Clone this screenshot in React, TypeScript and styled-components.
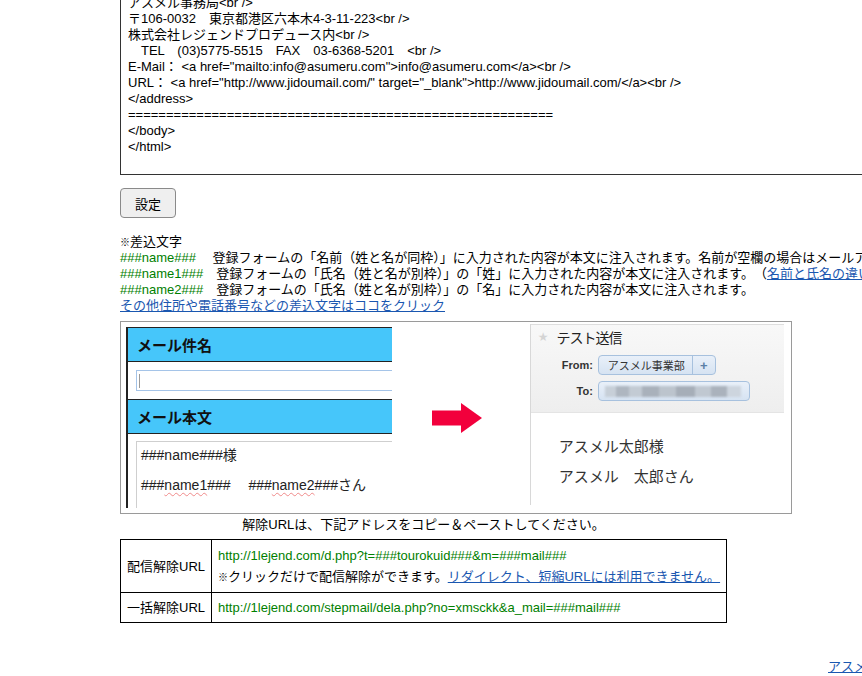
import React from "react";
import styled, { createGlobalStyle } from "styled-components";

const GlobalStyle = createGlobalStyle`
  html, body { margin: 0; padding: 0; background: #fff; overflow: hidden; }
  body {
    font-family: "Liberation Sans", "Noto Sans CJK JP", sans-serif;
    font-size: 13px;
    color: #000;
  }
`;

const Page = styled.div`
  width: 1100px;
  box-sizing: border-box;
  padding-left: 120px;
  margin-top: -40px;
`;

const SourceBox = styled.div`
  width: 900px;
  height: 215px;
  box-sizing: border-box;
  border: 1px solid #333;
  padding: 2px 7px;
  font: 13px/16px "Liberation Sans", "Noto Sans CJK JP", sans-serif;
  white-space: pre;
  overflow: hidden;
`;

const SetButton = styled.button`
  display: block;
  margin-top: 13px;
  width: 56px;
  height: 30px;
  padding: 0;
  border: 1px solid #8a8a8a;
  border-radius: 4px;
  background: #efefef;
  color: #000;
  font: 13px "Liberation Sans", "Noto Sans CJK JP", sans-serif;
`;

const Notes = styled.div`
  margin-top: 16px;
  line-height: 16px;
  white-space: nowrap;
`;

const NoteLine = styled.div``;

const Mark = styled.span`
  font-size: 10px;
  line-height: 1;
`;

const Tag = styled.span`
  color: #008000;
`;

const Link = styled.a`
  color: #1a57b0;
  text-decoration: underline;
  cursor: pointer;
`;

const Figure = styled.div`
  margin-top: 7px;
  width: 672px;
  height: 193px;
  box-sizing: border-box;
  border: 1px solid #9a9a9a;
  padding: 2px 7px 0 5px;
  display: flex;
  align-items: flex-start;
  overflow: hidden;
  background: #fff;
`;

const FormPanel = styled.div`
  margin-top: 3px;
  width: 265px;
  height: 181px;
  border-left: 2px solid #222;
  display: flex;
  flex-direction: column;
  overflow: hidden;
`;

const FormHeader = styled.div`
  height: 33px;
  border-top: 1px solid #222;
  border-bottom: 1px solid #222;
  background: #46c6fa;
  display: flex;
  align-items: center;
  padding-left: 9px;
  font: bold 15px "Noto Sans CJK JP", sans-serif;
  color: #111;
`;

const InputRow = styled.div`
  height: 37px;
  box-sizing: border-box;
  padding: 8px 0 0 8px;
`;

const FakeInput = styled.div`
  height: 21px;
  box-sizing: border-box;
  border: 1px solid #a5c4e8;
  border-right: none;
  position: relative;
  &::before {
    content: "";
    position: absolute;
    left: 2px;
    top: 3px;
    width: 1px;
    height: 14px;
    background: #9a9a9a;
  }
`;

const FormBody = styled.div`
  flex: 1;
  padding: 7px 0 0 8px;
  display: flex;
`;

const FakeTextarea = styled.div`
  flex: 1;
  border: 1px solid #cfcfcf;
  border-right: none;
  border-bottom: none;
  padding-left: 4px;
  display: flex;
  flex-direction: column;
  gap: 4px;
  font: 14px/26px "Liberation Sans", "Noto Sans CJK JP", sans-serif;
  color: #222;
  white-space: pre;
`;

const Spell = styled.span`
  text-decoration: underline wavy #f08a8a;
  text-decoration-thickness: 1px;
  text-underline-offset: 2px;
`;

const ArrowWrap = styled.div`
  width: 138px;
  box-sizing: border-box;
  padding: 79px 0 0 40px;
`;

const MailPanel = styled.div`
  width: 254px;
  height: 181px;
  border-left: 1px solid #d8d8d8;
  display: flex;
  flex-direction: column;
`;

const MailHeader = styled.div`
  height: 89px;
  box-sizing: border-box;
  border-top: 1px solid #dedede;
  border-bottom: 1px solid #e4e4e4;
  background: linear-gradient(#f8f8f8, #eeeeee);
  padding: 2px 0 0 7px;
  display: flex;
  flex-direction: column;
`;

const TitleRow = styled.div`
  display: flex;
  align-items: center;
  gap: 8px;
  height: 20px;
`;

const Star = styled.span`
  color: #d4d4d4;
  font: 12px "DejaVu Sans", sans-serif;
`;

const Title = styled.span`
  font: 14px "Noto Sans CJK JP", sans-serif;
  letter-spacing: -1px;
  color: #222;
`;

const AddrRow = styled.div<{ $top: number }>`
  display: flex;
  align-items: center;
  gap: 5px;
  margin-top: ${(p) => p.$top}px;
`;

const AddrLabel = styled.span`
  width: 55px;
  text-align: right;
  font: bold 11px "Liberation Sans", sans-serif;
  color: #333;
`;

const Pill = styled.div<{ $w: number }>`
  width: ${(p) => p.$w}px;
  height: 20px;
  box-sizing: border-box;
  border: 1px solid #a7c1de;
  border-radius: 4px;
  background: linear-gradient(#e9f0f9, #d6e3f2);
  display: flex;
  align-items: center;
  overflow: hidden;
`;

const PillText = styled.span`
  flex: 1;
  padding-left: 9px;
  font: 11px "Noto Sans CJK JP", sans-serif;
  color: #333;
`;

const PillPlus = styled.span`
  width: 22px;
  height: 100%;
  border-left: 1px solid #a7c1de;
  display: flex;
  align-items: center;
  justify-content: center;
  font: bold 13px "Liberation Sans", sans-serif;
  color: #5b7fa6;
`;

const Blurred = styled.div`
  margin: 0 8px 0 6px;
  flex: 1;
  height: 11px;
  filter: blur(1.2px);
  background: linear-gradient(
    90deg,
    #c7cfd8 0 8%,
    #aeb6c0 8% 18%,
    #c3cbd4 18% 27%,
    #a9b1bb 27% 40%,
    #bcc4cd 40% 52%,
    #a6aeb8 52% 66%,
    #c0c8d1 66% 78%,
    #aab2bc 78% 90%,
    #cdd5de 90% 100%
  );
`;

const MailBody = styled.div`
  padding: 18px 0 0 28px;
  font: 15px/30px "Noto Sans CJK JP", sans-serif;
  color: #333;
  white-space: pre;
`;

const UnsubTable = styled.table`
  margin-top: 2px;
  width: 605px;
  border-collapse: collapse;
  font-size: 13px;
`;

const Caption = styled.caption`
  line-height: 16px;
  padding: 1px 0 6px;
`;

const LabelCell = styled.td<{ $pad: number }>`
  width: 78px;
  border: 1px solid #000;
  padding: ${(p) => p.$pad}px 6px;
  line-height: 21px;
  text-align: center;
  white-space: nowrap;
`;

const ValueCell = styled.td<{ $pad: number }>`
  border: 1px solid #000;
  padding: ${(p) => p.$pad}px 6px;
  line-height: 21px;
  white-space: nowrap;
`;

const Footer = styled.div`
  margin-top: 36px;
  padding-left: 708px;
  line-height: 16px;
  white-space: nowrap;
`;

const sourceLines = [
  "==========================================",
  "<address>",
  "アスメル事務局<br />",
  "〒106-0032　東京都港区六本木4-3-11-223<br />",
  "株式会社レジェンドプロデュース内<br />",
  "　TEL　(03)5775-5515　FAX　03-6368-5201　<br />",
  'E-Mail： <a href="mailto:info@asumeru.com">info@asumeru.com</a><br />',
  'URL： <a href="http://www.jidoumail.com/" target="_blank">http://www.jidoumail.com/</a><br />',
  "</address>",
  "========================================================",
  "</body>",
  "</html>",
].join("\n");

function Arrow() {
  return (
    <svg width="50" height="30" viewBox="0 0 50 30">
      <rect x="0" y="7.5" width="30" height="15" fill="#f2003c" />
      <polygon points="29,0 50,15 29,30" fill="#f2003c" />
    </svg>
  );
}

export default function App() {
  return (
    <>
      <GlobalStyle />
      <Page>
        <SourceBox>{sourceLines}</SourceBox>
        <SetButton type="button">設定</SetButton>
        <Notes>
          <NoteLine>
            <Mark>※</Mark>差込文字
          </NoteLine>
          <NoteLine>
            <Tag>###name###</Tag>　 登録フォームの「名前（姓と名が同枠）」に入力された内容が本文に注入されます。名前が空欄の場合はメールアドレスが注入されます。
          </NoteLine>
          <NoteLine>
            <Tag>###name1###</Tag>　登録フォームの「氏名（姓と名が別枠）」の「姓」に入力された内容が本文に注入されます。　（<Link>名前と氏名の違いについて</Link>）
          </NoteLine>
          <NoteLine>
            <Tag>###name2###</Tag>　登録フォームの「氏名（姓と名が別枠）」の「名」に入力された内容が本文に注入されます。
          </NoteLine>
          <NoteLine>
            <Link>その他住所や電話番号などの差込文字はココをクリック</Link>
          </NoteLine>
        </Notes>

        <Figure>
          <FormPanel>
            <FormHeader>メール件名</FormHeader>
            <InputRow>
              <FakeInput />
            </InputRow>
            <FormHeader>メール本文</FormHeader>
            <FormBody>
              <FakeTextarea>
                <span>###name###様</span>
                <span>
                  ###<Spell>name1</Spell>###　 ###<Spell>name2</Spell>###さん
                </span>
              </FakeTextarea>
            </FormBody>
          </FormPanel>
          <ArrowWrap>
            <Arrow />
          </ArrowWrap>
          <MailPanel>
            <MailHeader>
              <TitleRow>
                <Star>★</Star>
                <Title>テスト送信</Title>
              </TitleRow>
              <AddrRow $top={8}>
                <AddrLabel>From:</AddrLabel>
                <Pill $w={118}>
                  <PillText>アスメル事業部</PillText>
                  <PillPlus>+</PillPlus>
                </Pill>
              </AddrRow>
              <AddrRow $top={6}>
                <AddrLabel>To:</AddrLabel>
                <Pill $w={152}>
                  <Blurred />
                </Pill>
              </AddrRow>
            </MailHeader>
            <MailBody>
              <div>アスメル太郎様</div>
              <div>アスメル　太郎さん</div>
            </MailBody>
          </MailPanel>
        </Figure>

        <UnsubTable>
          <Caption>解除URLは、下記アドレスをコピー＆ペーストしてください。</Caption>
          <tbody>
            <tr>
              <LabelCell $pad={5}>配信解除URL</LabelCell>
              <ValueCell $pad={5}>
                <Tag>http://1lejend.com/d.php?t=###tourokuid###&amp;m=###mail###</Tag>
                <br />
                <Mark>※</Mark>クリックだけで配信解除ができます。<Link>リダイレクト、短縮URLには利用できません。</Link>
              </ValueCell>
            </tr>
            <tr>
              <LabelCell $pad={4}>一括解除URL</LabelCell>
              <ValueCell $pad={4}>
                <Tag>http://1lejend.com/stepmail/dela.php?no=xmsckk&amp;a_mail=###mail###</Tag>
              </ValueCell>
            </tr>
          </tbody>
        </UnsubTable>

        <Footer>
          <Link>アスメル自動メール配信システム</Link>
        </Footer>
      </Page>
    </>
  );
}
